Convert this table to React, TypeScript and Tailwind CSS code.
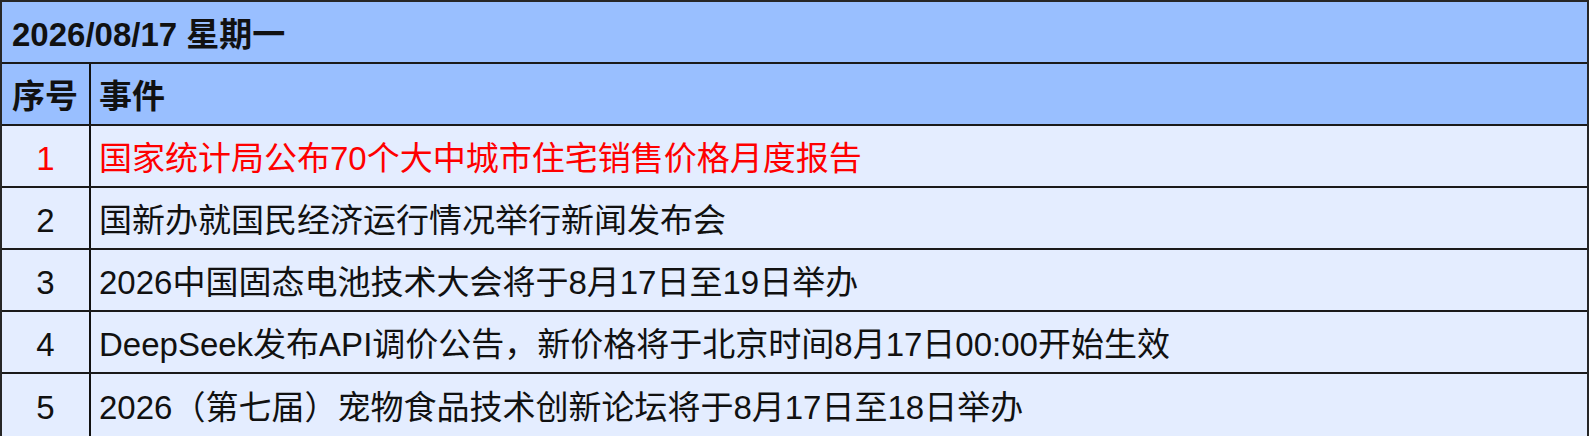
import React from "react";

const rows = [
  { n: "1", t: "国家统计局公布70个大中城市住宅销售价格月度报告", red: true },
  { n: "2", t: "国新办就国民经济运行情况举行新闻发布会" },
  { n: "3", t: "2026中国固态电池技术大会将于8月17日至19日举办" },
  { n: "4", t: "DeepSeek发布API调价公告，新价格将于北京时间8月17日00:00开始生效" },
  { n: "5", t: "2026（第七届）宠物食品技术创新论坛将于8月17日至18日举办" },
];

export default function App() {
  return (
    <div
      className="w-[1589px] h-[436px] border-2 border-[#262626] flex flex-col text-[#111] text-[33px] leading-none"
      style={{ fontFamily: '"Liberation Sans", Arial, "Noto Sans CJK SC", sans-serif' }}
    >
      <div className="h-[62px] shrink-0 bg-[#99bfff] border-b-2 border-[#1a1a1a] flex items-center pl-[10px] pt-[4px] font-bold">
        2026/08/17 星期一
      </div>
      <div className="h-[62px] shrink-0 bg-[#99bfff] border-b-2 border-[#1a1a1a] flex font-bold">
        <div className="w-[89px] shrink-0 border-r-2 border-[#111] flex items-center pl-[10px] pt-[4px]">序号</div>
        <div className="flex-1 flex items-center pl-[8px] pt-[4px]">事件</div>
      </div>
      {rows.map((r, i) => (
        <div
          key={r.n}
          className={`h-[62px] shrink-0 bg-[#e4edff] flex ${i < rows.length - 1 ? "border-b-2 border-[#1a1a1a]" : "h-[60px]"} ${r.red ? "text-[#ff0000]" : ""}`}
        >
          <div className="w-[89px] shrink-0 border-r-2 border-[#111] flex items-center justify-center pt-[4px]">{r.n}</div>
          <div className="flex-1 flex items-center pl-[8px] pt-[4px]">{r.t}</div>
        </div>
      ))}
    </div>
  );
}
